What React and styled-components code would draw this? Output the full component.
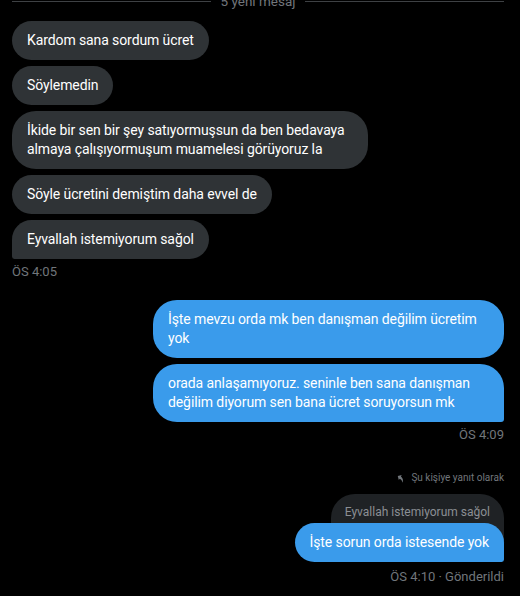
import React from "react";
import styled, { createGlobalStyle } from "styled-components";

const GlobalStyle = createGlobalStyle`
  html, body {
    margin: 0;
    padding: 0;
    background: #000;
    overflow: hidden;
  }
  body {
    font-family: Roboto, "Noto Sans", sans-serif;
    color: #e7e9ea;
    -webkit-font-smoothing: antialiased;
  }
`;

const incoming = [
  "Kardom sana sordum ücret",
  "Söylemedin",
  "İkide bir sen bir şey satıyormuşsun da ben bedavaya almaya çalışıyormuşum muamelesi görüyoruz la",
  "Söyle ücretini demiştim daha evvel de",
  "Eyvallah istemiyorum sağol",
];

const outgoing = [
  "İşte mevzu orda mk ben danışman değilim ücretim yok",
  "orada anlaşamıyoruz. seninle ben sana danışman değilim diyorum sen bana ücret soruyorsun mk",
];

function ReplyIcon() {
  return (
    <svg width="10" height="10" viewBox="0 0 24 24" fill="#71767b" style={{ transform: "rotate(30deg)" }}>
      <path d="M10 9V5l-7 7 7 7v-4.1c5 0 8.5 1.6 11 5.1-1-5-4-10-11-11z" />
    </svg>
  );
}

export default function App() {
  return (
    <>
      <GlobalStyle />
      <Page>
        <Divider>
          <Line />
          <DividerText>5 yeni mesaj</DividerText>
          <Line />
        </Divider>

        <Group side="left">
          {incoming.map((text, i) => (
            <Bubble key={i} side="left" last={i === incoming.length - 1}>
              {text}
            </Bubble>
          ))}
        </Group>
        <Time side="left">ÖS 4:05</Time>

        <Group side="right" spaced>
          {outgoing.map((text, i) => (
            <Bubble key={i} side="right" last={i === outgoing.length - 1}>
              {text}
            </Bubble>
          ))}
        </Group>
        <Time side="right">ÖS 4:09</Time>

        <ReplyBlock>
          <ReplyLabel>
            <ReplyIcon />
            Şu kişiye yanıt olarak
          </ReplyLabel>
          <Quote>Eyvallah istemiyorum sağol</Quote>
          <ReplyBubble side="right" last>
            İşte sorun orda istesende yok
          </ReplyBubble>
        </ReplyBlock>
        <Time side="right">ÖS 4:10 · Gönderildi</Time>
      </Page>
    </>
  );
}

// Styles

const Page = styled.div`
  display: flex;
  flex-direction: column;
  padding: 0 16px 0 12px;
  margin-top: -9px;
`;

const Divider = styled.div`
  display: flex;
  align-items: center;
  gap: 9px;
  height: 20px;
  margin-bottom: 10px;
`;

const Line = styled.div`
  flex: 1;
  height: 1px;
  background: #3e4144;
`;

const DividerText = styled.span`
  font-size: 13.5px;
  line-height: 20px;
  color: #71767b;
`;

const Group = styled.div`
  display: flex;
  flex-direction: column;
  align-items: ${(p) => (p.side === "right" ? "flex-end" : "flex-start")};
  gap: 6px;
  margin-top: ${(p) => (p.spaced ? "20px" : "0")};
`;

const Bubble = styled.div`
  max-width: ${(p) => (p.side === "right" ? "351px" : "356px")};
  box-sizing: border-box;
  padding: 10px 15px;
  font-size: 14px;
  line-height: 19px;
  letter-spacing: -0.1px;
  border-radius: 24px;
  color: #fff;
  background: ${(p) => (p.side === "right" ? "#3a9beb" : "#2f3336")};
  border-bottom-left-radius: ${(p) => (p.side === "left" && p.last ? "3px" : "24px")};
  border-bottom-right-radius: ${(p) => (p.side === "right" && p.last ? "3px" : "24px")};
`;

const Time = styled.div`
  align-self: ${(p) => (p.side === "right" ? "flex-end" : "flex-start")};
  margin-top: 5px;
  font-size: 13px;
  line-height: 16px;
  color: #71767b;
`;

const ReplyBlock = styled.div`
  display: flex;
  flex-direction: column;
  align-items: flex-end;
  margin-top: 28px;
  margin-bottom: 2px;
`;

const ReplyLabel = styled.div`
  display: flex;
  align-items: center;
  gap: 5px;
  font-size: 10px;
  line-height: 14px;
  color: #71767b;
  margin-bottom: 9px;
`;

const Quote = styled.div`
  padding: 10px 14px 22px;
  font-size: 12px;
  line-height: 16px;
  color: #8b8f94;
  background: #1f2225;
  border-radius: 24px 24px 0 0;
`;

const ReplyBubble = styled(Bubble)`
  position: relative;
  margin-top: -19px;
`;
